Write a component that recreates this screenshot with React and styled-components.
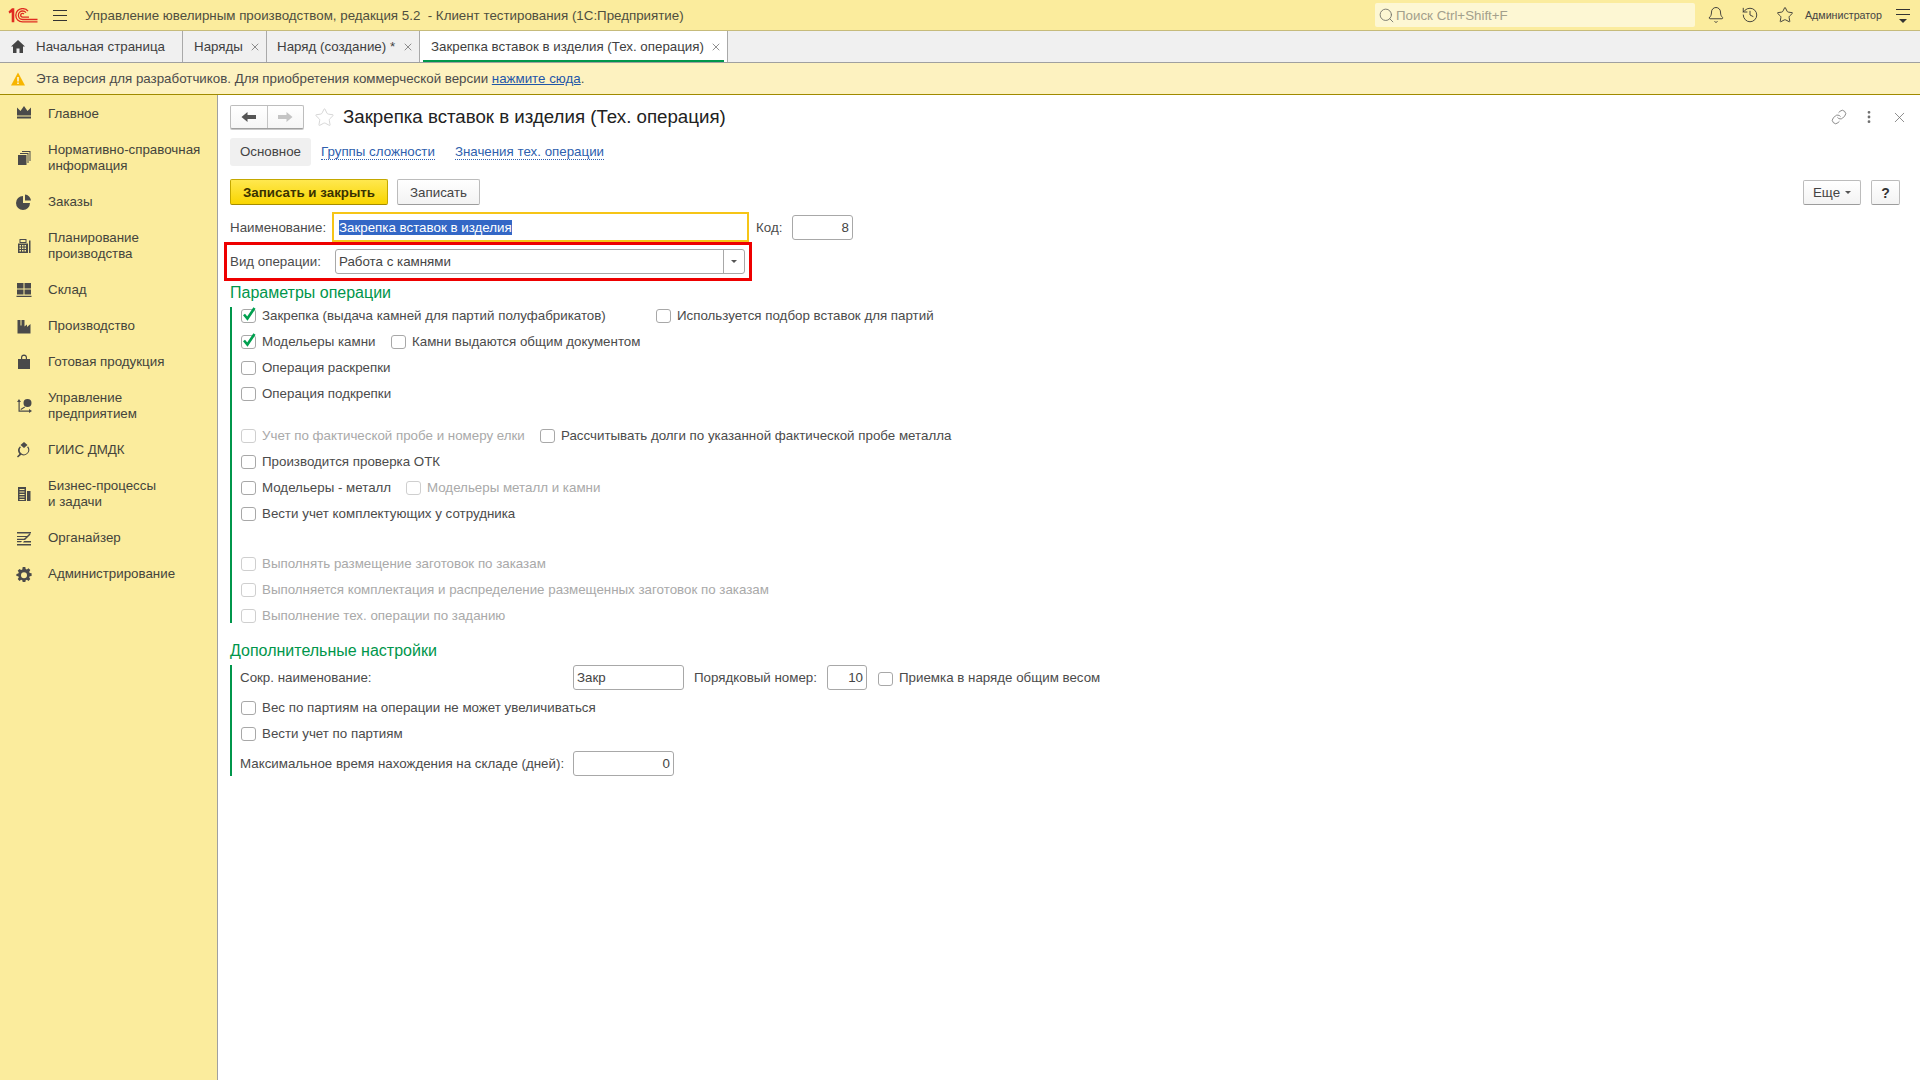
import React from 'react';
import styled, { createGlobalStyle } from 'styled-components';
import { Bell, History, Star, Link as LinkIcon, MoreVertical, X, Search } from 'lucide-react';

const GlobalStyle = createGlobalStyle`
  html, body { margin: 0; padding: 0; background: #fff; }
  * { box-sizing: border-box; }
  body { font-family: "Liberation Sans", Arial, sans-serif; font-size: 13.33px; color: #4b4b4b; }
`;

const Page = styled.div`
  width: 1920px;
  height: 1080px;
  overflow: hidden;
  display: flex;
  flex-direction: column;
`;

const TopBar = styled.header`
  height: 31px;
  background: #fbec9d;
  border-bottom: 1px solid #c6bb7b;
  display: flex;
  align-items: center;
  flex: none;
  padding-right: 10px;
`;

const LogoBox = styled.div`
  width: 53px;
  padding-left: 8px;
  display: flex;
`;

const Burger = styled.div`
  width: 14px;
  height: 11px;
  margin-right: 18px;
  border-top: 1px solid #333;
  border-bottom: 1px solid #333;
  position: relative;
  &::after {
    content: '';
    position: absolute;
    left: 0;
    right: 0;
    top: 4px;
    height: 1px;
    background: #333;
  }
`;

const AppTitle = styled.div`
  color: #4f4f3f;
  white-space: pre;
  flex: 1;
`;

const SearchBox = styled.div`
  width: 320px;
  height: 24px;
  background: #fdf7d3;
  border-radius: 2px;
  display: flex;
  align-items: center;
  padding-left: 3px;
  gap: 1px;
  color: #a3a08c;
  margin-right: 5px;
  svg { color: #77776c; flex: none; }
`;

const TopIcon = styled.div`
  width: ${(p) => p.$w || 33}px;
  display: flex;
  justify-content: center;
  color: #333;
`;

const UserName = styled.div`
  margin-left: 3px;
  width: 91px;
  font-size: 10.67px;
  color: #444;
`;

const MenuLines = styled.div`
  width: 14px;
  height: 12px;
  border-top: 1px solid #333;
  position: relative;
  &::before {
    content: '';
    position: absolute;
    left: 0;
    right: 0;
    top: 4px;
    height: 1px;
    background: #333;
  }
  &::after {
    content: '';
    position: absolute;
    left: 3px;
    top: 9px;
    border: 4px solid transparent;
    border-top-color: #333;
    border-bottom: 0;
  }
`;

const TabBar = styled.nav`
  height: 32px;
  background: #f0f0f0;
  border-bottom: 1px solid #a0a0a0;
  display: flex;
  flex: none;
`;

const Tab = styled.div`
  width: ${(p) => p.$w}px;
  padding-left: ${(p) => p.$pad}px;
  padding-bottom: 1px;
  display: flex;
  align-items: center;
  position: relative;
  white-space: nowrap;
  color: #3f3f3f;
  background: ${(p) => (p.$active ? '#fff' : 'transparent')};
  border-right: 1px solid #a9a9a9;
  ${(p) => p.$active && `
    &::after {
      content: '';
      position: absolute;
      left: 3px;
      right: 3px;
      bottom: 0;
      height: 2px;
      background: #00964b;
    }
  `}
`;

const TabClose = styled.span`
  position: absolute;
  right: 5px;
  top: 10px;
  display: flex;
  color: #555;
`;

const HomeMark = styled.svg`
  position: absolute;
  left: 11px;
  top: 9px;
`;

const Notice = styled.div`
  height: 32px;
  background: #fdf2c0;
  border-bottom: 1px solid #a08a00;
  display: flex;
  align-items: center;
  flex: none;
  padding-left: 11px;
  color: #4b4b4b;
  svg { margin-right: 11px; }
  a { color: #1f57a8; text-decoration: underline; }
`;

const Body = styled.div`
  flex: 1;
  display: flex;
  min-height: 0;
`;

const Sidebar = styled.aside`
  width: 218px;
  flex: none;
  padding-top: 1px;
  background: #fbec9d;
  border-right: 1px solid #a0a0a0;
`;

const SideRow = styled.div`
  height: ${(p) => (p.$double ? 52 : 36)}px;
  display: flex;
  align-items: center;
  padding-left: 16px;
  line-height: 16px;
  color: #44443c;
  svg { flex: none; margin-right: 16px; }
`;

const Main = styled.main`
  flex: 1;
  padding: 10px 20px 0 12px;
  min-width: 0;
`;

const TitleRow = styled.div`
  height: 24px;
  display: flex;
  align-items: center;
`;

const NavPair = styled.div`
  width: 74px;
  height: 24px;
  display: flex;
  border: 1px solid #bdbdbd;
  border-bottom-color: #a0a0a0;
  border-radius: 2px;
  background: linear-gradient(#fff, #f6f6f6);
  box-shadow: 0 1px 0 #c8c8c8;
`;

const NavCell = styled.div`
  flex: 1;
  display: flex;
  align-items: center;
  justify-content: center;
  & + & { border-left: 1px solid #c4c4c4; }
`;

const FavStar = styled.div`
  width: 39px;
  padding-left: 2px;
  display: flex;
  justify-content: center;
  color: #d0d0d0;
`;

const PageTitle = styled.h1`
  margin: 0;
  font-size: 18.7px;
  font-weight: 400;
  color: #222;
`;

const CornerIcons = styled.div`
  margin-left: auto;
  display: flex;
  color: #6f6f6f;
  margin-right: -14px;
`;

const CornerIcon = styled.div`
  width: 30px;
  display: flex;
  justify-content: center;
`;

const Pages = styled.div`
  margin-top: 9px;
  height: 28px;
  display: flex;
  align-items: center;
`;

const PageActive = styled.div`
  width: 81px;
  height: 28px;
  padding-bottom: 1px;
  background: #f0f0f0;
  border-radius: 3px;
  display: flex;
  align-items: center;
  justify-content: center;
  color: #444;
`;

const PageLink = styled.a`
  margin-left: ${(p) => p.$ml}px;
  color: #2f5fae;
  border-bottom: 1px dotted #2f5fae;
  line-height: 15px;
`;

const CommandBar = styled.div`
  margin-top: 13px;
  height: 26px;
  display: flex;
  align-items: flex-start;
`;

const Btn = styled.button`
  font: inherit;
  color: #444;
  height: ${(p) => (p.$h ? p.$h : 26)}px;
  width: ${(p) => p.$w}px;
  margin-left: ${(p) => p.$ml || 0}px;
  margin-top: ${(p) => p.$mt || 0}px;
  padding: 0;
  border: 1px solid #bcbcbc;
  border-bottom-color: #9c9c9c;
  border-radius: 2px;
  background: linear-gradient(#fff, #f3f3f3);
  display: flex;
  align-items: center;
  justify-content: center;
  gap: 5px;
`;

const PrimaryBtn = styled(Btn)`
  font-weight: 700;
  color: #3a3200;
  border-color: #c4a800;
  border-bottom-color: #a58c00;
  background: linear-gradient(#ffe84f, #f9d500);
`;

const HelpBtn = styled(Btn)`
  font-size: 14px;
  font-weight: 700;
  color: #333;
`;

const Spacer = styled.div`
  flex: 1;
`;

const FieldRow = styled.div`
  display: flex;
  align-items: center;
  height: ${(p) => p.$h}px;
  margin-top: ${(p) => p.$mt || 0}px;
  position: relative;
`;

const FieldLabel = styled.div`
  width: ${(p) => p.$w}px;
  margin-left: ${(p) => p.$ml || 0}px;
  flex: none;
  white-space: nowrap;
  color: #4b4b4b;
`;

const ActiveInput = styled.div`
  width: 417px;
  height: 30px;
  border: 2px solid #f6c517;
  display: flex;
  align-items: center;
  padding-left: 5px;
`;

const Selected = styled.span`
  background: #3367c6;
  color: #fff;
  line-height: 15px;
`;

const TextInput = styled.div`
  width: ${(p) => p.$w}px;
  height: 25px;
  flex: none;
  border: 1px solid #a8a8a8;
  border-radius: 3px;
  display: flex;
  align-items: center;
  justify-content: ${(p) => (p.$right ? 'flex-end' : 'flex-start')};
  padding: 0 3px;
  color: #444;
`;

const Combo = styled(TextInput)`
  padding-right: 0;
  justify-content: space-between;
`;

const ComboArrow = styled.div`
  width: 21px;
  height: 100%;
  border-left: 1px solid #a8a8a8;
  display: flex;
  align-items: center;
  justify-content: center;
  &::after {
    content: '';
    border: 3px solid transparent;
    border-top-color: #555;
    border-bottom: 0;
  }
`;

const RedFrame = styled.div`
  position: absolute;
  left: -6px;
  top: 0;
  width: 528px;
  height: 39px;
  border: 3px solid #ee0000;
  pointer-events: none;
`;

const SectionTitle = styled.h2`
  margin: ${(p) => p.$mt}px 0 4px;
  height: 20px;
  font-size: 16px;
  line-height: 20px;
  font-weight: 400;
  color: #00964b;
`;

const Group = styled.section`
  border-left: 2px solid #00964b;
  padding-left: 8px;
  display: flex;
  flex-direction: column;
  gap: 10px;
`;

const CheckRow = styled.div`
  height: ${(p) => p.$h || 16}px;
  display: flex;
  align-items: center;
  margin-top: ${(p) => p.$mt || 0}px;
`;

const CheckItem = styled.label`
  display: flex;
  align-items: center;
  gap: 6px;
  padding-left: 1px;
  flex: none;
  width: ${(p) => (p.$w ? `${p.$w}px` : 'auto')};
  white-space: nowrap;
  margin-left: ${(p) => p.$ml || 0}px;
  color: ${(p) => (p.$off ? '#a9a9a9' : '#4b4b4b')};
`;

const Box = styled.span`
  width: 15px;
  height: 14px;
  flex: none;
  margin-top: 2px;
  border: 1px solid ${(p) => (p.$off ? '#cfcfcf' : '#a8a8a8')};
  border-radius: 3px;
  background: #fff;
  position: relative;
  svg { position: absolute; left: 0; top: -4px; }
`;

function Check({ label, checked, off, w, ml }) {
  return (
    <CheckItem $off={off} $w={w} $ml={ml}>
      <Box $off={off}>
        {checked && (
          <svg width="15" height="16" viewBox="0 0 15 16">
            <path d="M2 8.500l3.400 4L12.500 2" fill="none" stroke="#00a04f" strokeWidth="2.6" />
          </svg>
        )}
      </Box>
      {label}
    </CheckItem>
  );
}

function Logo() {
  return (
    <svg width="30" height="15" viewBox="0 0 30 15" fill="none" stroke="#e02b20" strokeWidth="1.3">
      <path d="M0.500 3.500L4 0.200H6.300V14.300H3.700V4.200L1.400 5.600z" fill="#e02b20" stroke="none" />
      <path d="M20 3.200C18.700 1.400 16.600.6 14.500.6 10.600.6 7.800 3.500 7.800 7.300s2.800 6.600 6.700 6.600H29.500" />
      <path d="M18 4.600C17.200 3.600 16 3 14.600 3c-2.400 0-4.200 1.900-4.200 4.300s1.800 4.200 4.200 4.200H29.500" />
      <path d="M16 6C15.600 5.600 15.100 5.400 14.600 5.400c-1.100 0-1.900.8-1.900 1.900s.8 1.800 1.900 1.800H21" />
    </svg>
  );
}

const ICON_PATHS = {
  crown: 'M1 1.500l3.500 3.500L8 0l3.500 5L15 1.500V9.500H1zM1 10.500h14V12.500H1z',
  cards: 'M2 5h8.500v10H2zM4 3h8.500v10h-1V4H4zM6 1h8.500v10h-1V2H6z',
  pie: 'M7 2v7h7A7 7 0 1 1 7 2zM9 0.500a6.500 6.500 0 0 1 6 6H9z',
  calc: 'M3.500 1h7v4h-7zM4.500 2v2h5V2zM2 5.500h10V15H2zM13 2.500h1.500V15H13zM3.500 7v1.500H5V7zM6 7v1.500h1.500V7zM8.500 7v1.500H10V7zM3.500 9.500V11H5V9.500zM6 9.500V11h1.500V9.500zM8.500 9.500V11H10V9.500zM3.500 12v1.500H5V12zM6 12v1.500h1.500V12zM8.500 12v1.500H10V12z',
  grid: 'M1 1h6.500v5.500H1zM8.500 1H15v5.500H8.500zM1 7.500h6.500V12.500H1zM8.500 7.500H15V12.500H8.500zM0.500 13.800h15V15h-15z',
  factory: 'M1.500 15.500V2h3v5.500h1V2h3v6.500L11 6.500v2.500l3.500-3v9.500z',
  bag: 'M2 5h3V3.500C5 1.500 6.200.5 8 .5s3 1 3 3V5h3v10H2zM6.200 5h3.600V3.500C9.800 2.500 9.200 2 8 2s-1.800.5-1.800 1.500z',
  chart: 'M3 1l2 3H3.700v8.500H13V11l3 2-3 2v-1.200H2.500V4H1zM4.500 11l4-2.500.5.900-4 2.500zM11.500 1a4 4 0 1 1 0 8 4 4 0 0 1 0-8z',
  giis: 'M8 0l3.500 3L8 6 4.500 3zM3.800 4.500l1.200.5a4.300 4.300 0 1 0 6 0l1.200-.5a5.600 5.600 0 0 1-7 8.300L2 15.500l-1-1 2.400-2.600A5.600 5.600 0 0 1 3.800 4.500z',
  building: 'M2 1h8v14H2zM11 5h3.500v10H11zM3.500 3v1h5V3zM3.500 5.500v1h5v-1zM3.500 8v1h5V8zM3.500 10.500v1h5v-1zM3.500 13v1h5v-1z',
  organizer: 'M1 2h14v1.500H1zM1 6h10l2.500-2.500 1 1L9 10H1V8.800h7L10 7H1zM1 11h5l-1 1.200H1zM8 11h7v1.500H7zM1 14h14v1.500H1z',
  gear: 'M6.700 1h2.600l.4 1.900 1.200.5 1.600-1.100 1.800 1.800-1.100 1.600.5 1.200 1.900.4v2.600l-1.900.4-.5 1.200 1.100 1.600-1.800 1.800-1.600-1.100-1.200.5-.4 1.900H6.700l-.4-1.900-1.200-.5-1.600 1.100-1.800-1.800 1.100-1.600-.5-1.200-1.900-.4V7.900l1.900-.4.5-1.200-1.100-1.600 1.800-1.800 1.600 1.100 1.200-.5zM8 6.200a3 3 0 1 0 0 6 3 3 0 0 0 0-6z',
};

const MENU = [
  { icon: 'crown', lines: ['Главное'] },
  { icon: 'cards', lines: ['Нормативно-справочная', 'информация'] },
  { icon: 'pie', lines: ['Заказы'] },
  { icon: 'calc', lines: ['Планирование', 'производства'] },
  { icon: 'grid', lines: ['Склад'] },
  { icon: 'factory', lines: ['Производство'] },
  { icon: 'bag', lines: ['Готовая продукция'] },
  { icon: 'chart', lines: ['Управление', 'предприятием'] },
  { icon: 'giis', lines: ['ГИИС ДМДК'] },
  { icon: 'building', lines: ['Бизнес-процессы', 'и задачи'] },
  { icon: 'organizer', lines: ['Органайзер'] },
  { icon: 'gear', lines: ['Администрирование'] },
];

function Close() {
  return (
    <TabClose>
      <X size={12} strokeWidth={1.3} />
    </TabClose>
  );
}

export default function App() {
  return (
    <Page>
      <GlobalStyle />
      <TopBar>
        <LogoBox>
          <Logo />
        </LogoBox>
        <Burger />
        <AppTitle>Управление ювелирным производством, редакция 5.2  - Клиент тестирования (1С:Предприятие)</AppTitle>
        <SearchBox>
          <Search size={17} strokeWidth={1.3} />
          Поиск Ctrl+Shift+F
        </SearchBox>
        <TopIcon $w={32}><Bell size={18} strokeWidth={1.2} /></TopIcon>
        <TopIcon $w={36}><History size={18} strokeWidth={1.2} /></TopIcon>
        <TopIcon $w={34}><Star size={18} strokeWidth={1.2} /></TopIcon>
        <UserName>Администратор</UserName>
        <MenuLines />
      </TopBar>

      <TabBar>
        <Tab $w={183} $pad={36}>
          <HomeMark width="14" height="13" viewBox="0 0 14 13">
            <path d="M7 0L0 6.500h2V13h3.500V8.500h3V13H12V6.500h2z" fill="#444" />
          </HomeMark>
          Начальная страница
        </Tab>
        <Tab $w={84} $pad={11}>Наряды<Close /></Tab>
        <Tab $w={153} $pad={10}>Наряд (создание) *<Close /></Tab>
        <Tab $w={308} $pad={11} $active>Закрепка вставок в изделия (Тех. операция)<Close /></Tab>
      </TabBar>

      <Notice>
        <svg width="14" height="14" viewBox="0 0 14 14">
          <path d="M7 0.500L14 13.500H0z" fill="#f7b500" />
          <path d="M6.300 5h1.400v4.500H6.300zM6.300 10.500h1.400V12H6.300z" fill="#fff" />
        </svg>
        <span>Эта версия для разработчиков. Для приобретения коммерческой версии <a>нажмите сюда</a>.</span>
      </Notice>

      <Body>
        <Sidebar>
          {MENU.map((item) => (
            <SideRow key={item.icon} $double={item.lines.length > 1}>
              <svg width="16" height="16" viewBox="0 0 16 16">
                <path d={ICON_PATHS[item.icon]} fill="#4a4a4a" fillRule="evenodd" />
              </svg>
              <div>
                {item.lines.map((line) => (
                  <div key={line}>{line}</div>
                ))}
              </div>
            </SideRow>
          ))}
        </Sidebar>

        <Main>
          <TitleRow>
            <NavPair>
              <NavCell>
                <svg width="16" height="12" viewBox="0 0 16 12">
                  <path d="M0.500 6L6.500 1v3H15v4H6.500v3z" fill="#555" />
                </svg>
              </NavCell>
              <NavCell>
                <svg width="16" height="12" viewBox="0 0 16 12">
                  <path d="M15.500 6L9.500 1v3H1v4h8.500v3z" fill="#c4c4c4" />
                </svg>
              </NavCell>
            </NavPair>
            <FavStar><Star size={21} strokeWidth={1} /></FavStar>
            <PageTitle>Закрепка вставок в изделия (Тех. операция)</PageTitle>
            <CornerIcons>
              <CornerIcon><LinkIcon size={16} strokeWidth={1.2} /></CornerIcon>
              <CornerIcon><MoreVertical size={16} strokeWidth={2.2} /></CornerIcon>
              <CornerIcon><X size={17} strokeWidth={1.1} /></CornerIcon>
            </CornerIcons>
          </TitleRow>

          <Pages>
            <PageActive>Основное</PageActive>
            <PageLink $ml={10}>Группы сложности</PageLink>
            <PageLink $ml={20}>Значения тех. операции</PageLink>
          </Pages>

          <CommandBar>
            <PrimaryBtn $w={158}>Записать и закрыть</PrimaryBtn>
            <Btn $w={83} $ml={9}>Записать</Btn>
            <Spacer />
            <Btn $w={58} $h={25} $mt={1}>
              Еще
              <svg width="6" height="3" viewBox="0 0 6 3"><path d="M0 0h6L3 3z" fill="#555" /></svg>
            </Btn>
            <HelpBtn $w={29} $h={25} $mt={1} $ml={10}>?</HelpBtn>
          </CommandBar>

          <FieldRow $h={30} $mt={7}>
            <FieldLabel $w={102}>Наименование:</FieldLabel>
            <ActiveInput>
              <Selected>Закрепка вставок в изделия</Selected>
            </ActiveInput>
            <FieldLabel $w={36} $ml={7}>Код:</FieldLabel>
            <TextInput $w={61} $right>8</TextInput>
          </FieldRow>

          <FieldRow $h={39}>
            <FieldLabel $w={105}>Вид операции:</FieldLabel>
            <Combo $w={410}>
              Работа с камнями
              <ComboArrow />
            </Combo>
            <RedFrame />
          </FieldRow>

          <SectionTitle $mt={2}>Параметры операции</SectionTitle>
          <Group>
            <CheckRow>
              <Check checked w={415} label="Закрепка (выдача камней для партий полуфабрикатов)" />
              <Check label="Используется подбор вставок для партий" />
            </CheckRow>
            <CheckRow>
              <Check checked w={150} label="Модельеры камни" />
              <Check label="Камни выдаются общим документом" />
            </CheckRow>
            <CheckRow><Check label="Операция раскрепки" /></CheckRow>
            <CheckRow><Check label="Операция подкрепки" /></CheckRow>
            <CheckRow $mt={16}>
              <Check off w={299} label="Учет по фактической пробе и номеру елки" />
              <Check label="Рассчитывать долги по указанной фактической пробе металла" />
            </CheckRow>
            <CheckRow><Check label="Производится проверка ОТК" /></CheckRow>
            <CheckRow>
              <Check w={165} label="Модельеры - металл" />
              <Check off label="Модельеры металл и камни" />
            </CheckRow>
            <CheckRow><Check label="Вести учет комплектующих у сотрудника" /></CheckRow>
            <CheckRow $mt={24}><Check off label="Выполнять размещение заготовок по заказам" /></CheckRow>
            <CheckRow><Check off label="Выполняется комплектация и распределение размещенных заготовок по заказам" /></CheckRow>
            <CheckRow><Check off label="Выполнение тех. операции по заданию" /></CheckRow>
          </Group>

          <SectionTitle $mt={18}>Дополнительные настройки</SectionTitle>
          <Group>
            <CheckRow $h={25}>
              <FieldLabel $w={333}>Сокр. наименование:</FieldLabel>
              <TextInput $w={111}>Закр</TextInput>
              <FieldLabel $w={133} $ml={10}>Порядковый номер:</FieldLabel>
              <TextInput $w={40} $right>10</TextInput>
              <Check ml={10} label="Приемка в наряде общим весом" />
            </CheckRow>
            <CheckRow $mt={-1}><Check label="Вес по партиям на операции не может увеличиваться" /></CheckRow>
            <CheckRow><Check label="Вести учет по партиям" /></CheckRow>
            <CheckRow $h={25}>
              <FieldLabel $w={333}>Максимальное время нахождения на складе (дней):</FieldLabel>
              <TextInput $w={101} $right>0</TextInput>
            </CheckRow>
          </Group>
        </Main>
      </Body>
    </Page>
  );
}
